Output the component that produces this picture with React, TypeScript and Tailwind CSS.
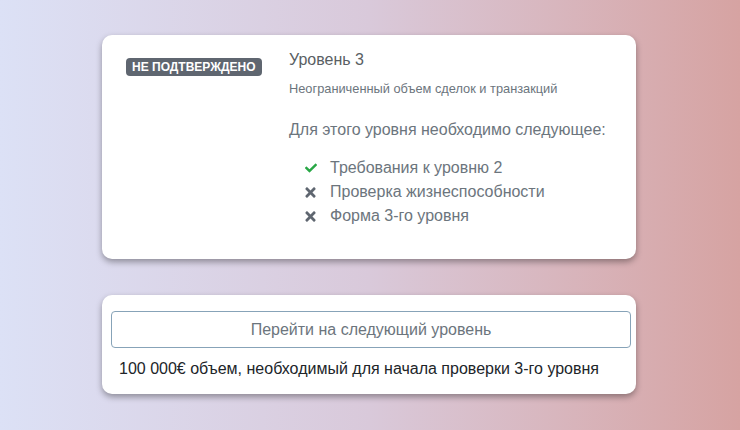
import { FaCheck, FaTimes } from 'react-icons/fa';

const requirements = [
  { label: 'Требования к уровню 2', done: true },
  { label: 'Проверка жизнеспособности', done: false },
  { label: 'Форма 3-го уровня', done: false },
];

const App = () => {
  return (
    <div
      className="h-[430px] w-full overflow-hidden bg-gradient-to-r from-[#dce1f6] via-[#d9c9da] to-[#d6a3a2] pt-[35px]"
      style={{ fontFamily: '"Liberation Sans", Arial, sans-serif' }}
    >
      <div className="mx-auto w-[534px] -translate-x-[1px]">
        {/* Level card */}
        <div className="flex h-[224px] rounded-[10px] bg-white shadow-[0_3px_6px_rgba(0,0,0,0.35)]">
          <div className="w-[187px] shrink-0 pl-[24px] pt-[19px]">
            <span className="inline-block rounded-[4px] bg-[#5f6670] px-[6px] py-[2px] text-[12px] font-bold leading-[14px] text-white">
              НЕ ПОДТВЕРЖДЕНО
            </span>
          </div>
          <div className="pt-[13px] text-[#6c757d]">
            <h2 className="text-[16px] leading-[24px] text-[#5a5f64]">Уровень 3</h2>
            <p className="mt-[8px] text-[12.8px] leading-[18px]">
              Неограниченный объем сделок и транзакций
            </p>
            <p className="mt-[20px] text-[16px] leading-[24px]">
              Для этого уровня необходимо следующее:
            </p>
            <ul className="mt-[14px] pl-[16px]">
              {requirements.map((r) => (
                <li key={r.label} className="flex items-center text-[16px] leading-[24px]">
                  <span className="flex w-[25px] justify-start">
                    {r.done ? (
                      <FaCheck className="h-[12px] w-[12px] text-[#28a745]" />
                    ) : (
                      <FaTimes className="h-[15px] w-[11px] text-[#5f6670]" />
                    )}
                  </span>
                  <span>{r.label}</span>
                </li>
              ))}
            </ul>
          </div>
        </div>

        {/* Next level card */}
        <div className="mt-[36px] h-[99px] rounded-[10px] bg-white pl-[9px] pr-[5px] pt-[16px] shadow-[0_3px_6px_rgba(0,0,0,0.35)]">
          <button
            type="button"
            className="h-[37px] w-full rounded-[4px] border border-[#87a3b8] text-[16px] text-[#6c757d]"
          >
            Перейти на следующий уровень
          </button>
          <p className="mt-[9px] pl-[8px] text-[16px] leading-[24px] text-[#212529]">
            100 000€ объем, необходимый для начала проверки 3-го уровня
          </p>
        </div>
      </div>
    </div>
  );
};

export default App;
